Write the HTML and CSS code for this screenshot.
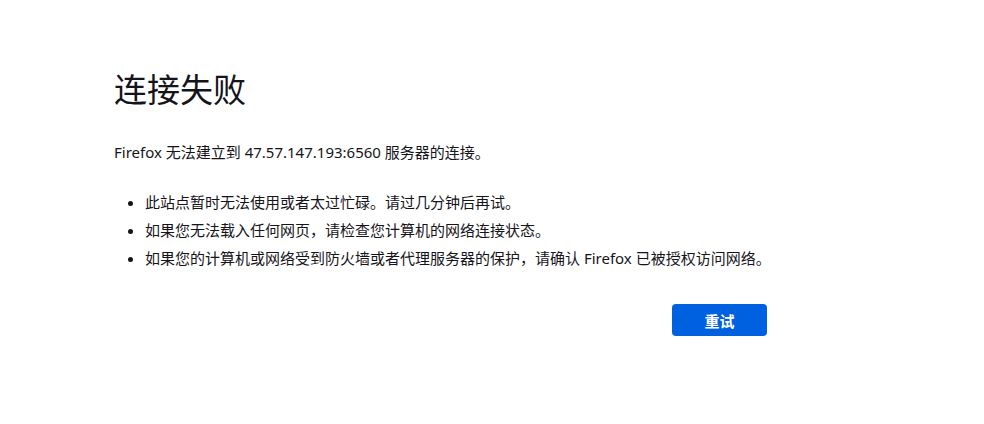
FILE: index.html
```html
<!DOCTYPE html>
<html lang="zh-CN">
<head>
<meta charset="utf-8">
<title>连接失败</title>
<link rel="stylesheet" href="styles.css">
</head>
<body>
<main class="container">
  <h1 class="title">连接失败</h1>
  <p class="desc">Firefox 无法建立到 47.57.147.193:6560 服务器的连接。</p>
  <ul class="tips">
    <li>此站点暂时无法使用或者太过忙碌。请过几分钟后再试。</li>
    <li>如果您无法载入任何网页，请检查您计算机的网络连接状态。</li>
    <li>如果您的计算机或网络受到防火墙或者代理服务器的保护，请确认 Firefox 已被授权访问网络。</li>
  </ul>
  <div class="actions">
    <button class="retry" type="button">重试</button>
  </div>
</main>
</body>
</html>
```

FILE: styles.css
```css
html, body {
  margin: 0;
  padding: 0;
  background: #ffffff;
}
body {
  font-family: "Noto Sans", "Noto Sans CJK SC", sans-serif;
  font-size: 15px;
  color: #15141a;
}
.container {
  width: 653px;
  padding: 70px 0 0 114px;
}
.title {
  margin: 0;
  font-size: 33px;
  font-weight: 400;
  line-height: 40px;
}
.desc {
  margin: 31px 0 0;
  line-height: 22px;
}
.tips {
  margin: 25px 0 0;
  padding-left: 31px;
}
.tips li {
  line-height: 28px;
  white-space: nowrap;
}
.actions {
  display: flex;
  justify-content: flex-end;
  margin-top: 32px;
}
.retry {
  width: 95px;
  height: 32px;
  border: none;
  border-radius: 4px;
  background: #0061e0;
  color: #ffffff;
  font-family: "Noto Sans CJK SC", sans-serif;
  font-size: 15px;
  font-weight: 700;
  padding: 0;
}
```
